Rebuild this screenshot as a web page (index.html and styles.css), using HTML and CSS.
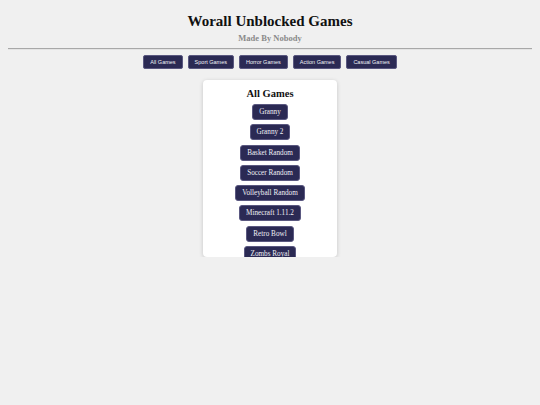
FILE: index.html
```
<!DOCTYPE html>
<html>
<head>
<meta charset="utf-8">
<link rel="stylesheet" href="styles.css">
</head>
<body>
<header class="header">
  <h1 class="title">Worall Unblocked Games</h1>
  <p class="subtitle">Made By Nobody</p>
</header>
<hr class="divider">
<nav class="nav">
  <button class="nav-btn">All Games</button>
  <button class="nav-btn">Sport Games</button>
  <button class="nav-btn">Horror Games</button>
  <button class="nav-btn">Action Games</button>
  <button class="nav-btn">Casual Games</button>
</nav>
<main class="card">
  <h2 class="card-title">All Games</h2>
  <div class="game-list">
    <button class="game-btn">Granny</button>
    <button class="game-btn">Granny 2</button>
    <button class="game-btn">Basket Random</button>
    <button class="game-btn">Soccer Random</button>
    <button class="game-btn">Volleyball Random</button>
    <button class="game-btn">Minecraft 1.11.2</button>
    <button class="game-btn">Retro Bowl</button>
    <button class="game-btn">Zombs Royal</button>
  </div>
</main>
</body>
</html>
```
FILE: styles.css
```
html, body {
  background: #f0f0f0;
}
body {
  margin: 8px;
  font-family: "Liberation Serif", serif;
  color: #111;
}
.header {
  text-align: center;
}
.title {
  margin: 4px 0 0;
  font-size: 15px;
  line-height: 18px;
  font-weight: bold;
}
.subtitle {
  margin: 3px 0 0;
  font-size: 8.5px;
  line-height: 10px;
  font-weight: bold;
  color: #8a8a8a;
}
.divider {
  margin: 5px 0 0;
  border: 0;
  border-top: 1px solid #a8a8a8;
  border-bottom: 1px solid #e4e4e4;
  height: 0;
}
.nav {
  display: flex;
  justify-content: center;
  gap: 5px;
  margin-top: 5px;
}
.nav-btn {
  font-family: "Liberation Sans", Arial, sans-serif;
  font-size: 5.5px;
  height: 14px;
  padding: 0 6px;
  background: #2b2a54;
  color: #f0f0f5;
  border: 1px solid #5a5880;
  border-radius: 2px;
}
.card {
  width: 134px;
  height: 177px;
  margin: 11px auto 0;
  background: #fff;
  border-radius: 4px;
  box-shadow: 0 1px 4px rgba(0,0,0,0.18);
  overflow: hidden;
  box-sizing: border-box;
  padding-top: 8px;
  text-align: center;
}
.card-title {
  margin: 0;
  font-size: 10.5px;
  line-height: 12px;
  font-weight: bold;
}
.game-list {
  display: flex;
  flex-direction: column;
  align-items: center;
  gap: 4.3px;
  margin-top: 4px;
}
.game-btn {
  font-family: "Liberation Serif", serif;
  font-size: 7.2px;
  height: 16px;
  padding: 0 6px;
  background: #2b2a54;
  color: #f0f0f5;
  border: 1px solid #5a5880;
  border-radius: 3px;
}
```
